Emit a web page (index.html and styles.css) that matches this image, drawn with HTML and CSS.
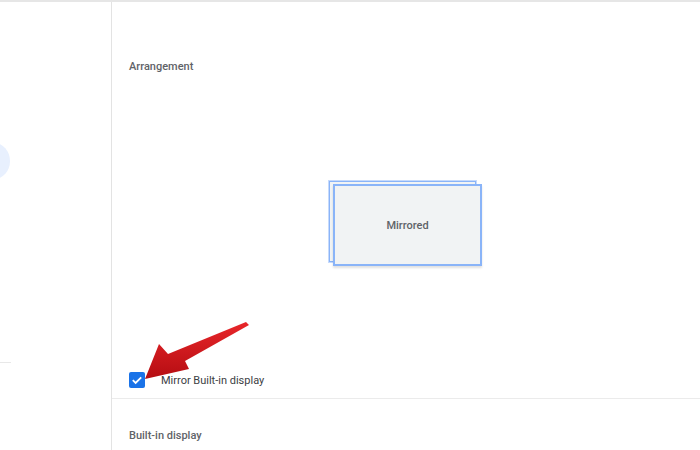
FILE: index.html
```html
<!DOCTYPE html>
<html>
<head>
<meta charset="utf-8">
<link rel="stylesheet" href="styles.css">
</head>
<body>
<div class="page">
  <aside class="sidebar">
    <div class="blob"></div>
    <div class="stub"></div>
  </aside>
  <main class="main">
    <div class="section-title arr">Arrangement</div>
    <div class="canvas">
      <div class="disp back"></div>
      <div class="disp front">Mirrored</div>
    </div>
    <div class="check-row">
      <span class="checkbox">
        <svg width="16" height="16" viewBox="0 0 16 16"><path d="M3.8 8.2l2.8 2.7 5.6-5.6" fill="none" stroke="#fff" stroke-width="1.8"/></svg>
      </span>
      <span class="check-label">Mirror Built-in display</span>
    </div>
    <div class="section-title builtin">Built-in display</div>
  </main>
  <svg class="arrow" width="700" height="450" viewBox="0 0 700 450">
    <defs>
      <linearGradient id="rg" x1="0" y1="0" x2="0" y2="1">
        <stop offset="0" stop-color="#e8262a"/>
        <stop offset="1" stop-color="#b50d12"/>
      </linearGradient>
    </defs>
    <polygon points="246,320 249,323 185,359 189,367 145,377 159,342 168,352" fill="url(#rg)"/>
  </svg>
</div>
</body>
</html>
```
FILE: styles.css
```css
html, body { margin: 0; padding: 0; background: #fff; }
body { font-family: Roboto, "Noto Sans", Arial, sans-serif; }
.page {
  position: relative;
  width: 700px;
  height: 450px;
  overflow: hidden;
  display: flex;
  border-top: 2px solid #e6e6e6;
  box-sizing: border-box;
}
.sidebar {
  position: relative;
  width: 111px;
  flex: none;
  border-right: 1px solid #e3e3e3;
}
.blob {
  position: absolute;
  left: -22px;
  top: 141px;
  width: 32px;
  height: 36px;
  border-radius: 50%;
  background: #e8f0fe;
}
.stub {
  position: absolute;
  left: 0;
  top: 360px;
  width: 11px;
  border-top: 1px solid #e8e8e8;
}
.main {
  flex: 1;
  display: flex;
  flex-direction: column;
}
.section-title {
  font-size: 11px;
  font-weight: 500;
  color: #5f6368;
  padding-left: 17px;
  line-height: 14px;
}
.arr { margin-top: 58px; }
.canvas {
  position: relative;
  height: 288px;
}
.disp {
  position: absolute;
  box-sizing: border-box;
  background: #f1f3f4;
  border: 1px solid #8ab4f8;
}
.back {
  left: 217px;
  top: 107px;
  width: 147px;
  height: 81px;
  outline: 1px solid #c6dafc;
  outline-offset: 0;
}
.front {
  left: 221px;
  top: 110px;
  width: 149px;
  height: 82px;
  border: 2px solid #8ab4f8;
  box-shadow: 0 2px 2px rgba(0,0,0,0.12);
  display: flex;
  align-items: center;
  justify-content: center;
  font-size: 11px;
  font-weight: 500;
  color: #5f6368;
}
.check-row {
  display: flex;
  align-items: center;
  height: 36px;
  padding-left: 17px;
  border-bottom: 1px solid #ebebeb;
}
.checkbox {
  width: 16px;
  height: 16px;
  border-radius: 2px;
  background: #1a73e8;
  display: flex;
}
.check-label {
  margin-left: 16px;
  font-size: 11px;
  color: #3c4043;
}
.builtin { margin-top: 30px; }
.arrow {
  position: absolute;
  left: 0;
  top: 0;
  pointer-events: none;
}
```
